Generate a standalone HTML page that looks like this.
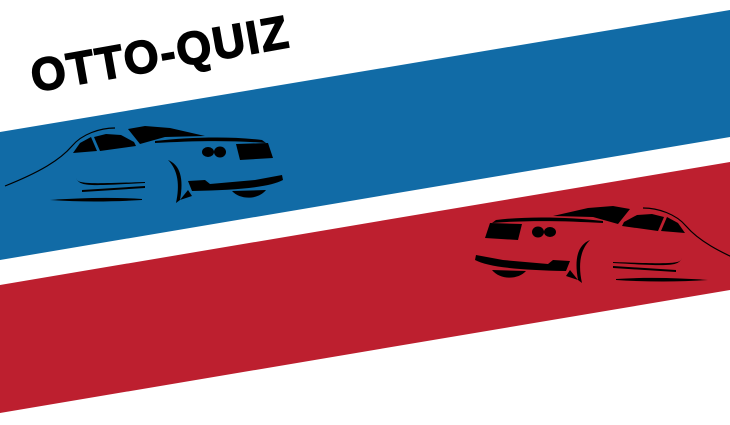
<!DOCTYPE html>
<html><head><meta charset="utf-8"><style>
html,body{margin:0;padding:0;background:#fff;width:730px;height:425px;overflow:hidden}
svg{display:block}
</style></head><body>
<svg width="730" height="425" viewBox="0 0 730 425" xmlns="http://www.w3.org/2000/svg">
<rect width="730" height="425" fill="#fff"/>
<polygon points="0,132 730,10 730,137 0,260" fill="#116ba6"/>
<polygon points="0,285 730,162 730,290 0,413" fill="#bd1f2f"/>
<text x="0" y="0" transform="translate(34,92) rotate(-10)" font-family="Liberation Sans, sans-serif" font-weight="bold" font-size="46" fill="#000" stroke="#000" stroke-width="1.6" letter-spacing="2" textLength="262" lengthAdjust="spacingAndGlyphs">OTTO-QUIZ</text>
<g id="car" fill="#000">
 <path d="M5,186 C40,172 60,160 72,146 C82,134 100,128 115,128" fill="none" stroke="#000" stroke-width="1.2"/>
 <path d="M73,153 L80,143 L91,137 L97,151 Z"/>
 <path d="M100,151 L94,137 L106,134 L121,135 L134,142 L136,146 Z"/>
 <path d="M128,129 L145,126 L170,128 L205,136 L165,137 L140,144 Z"/>
 <path d="M155,141 C190,137 230,136 262,140 L266,143 C230,140 190,141 155,143 Z"/>
 <ellipse cx="208" cy="152" rx="6" ry="5"/>
 <ellipse cx="220" cy="152" rx="6" ry="5.5"/>
 <path d="M236,144 L268,143 L273,158 L240,160 Z"/>
 <path d="M188,181 L205,180 L210,184 L255,180 L282,175 L283,180 C270,187 240,190 192,191 Z"/>
 <path d="M168,160 C180,165 184,178 180,200 L176,203 C180,185 178,170 168,160 Z"/>
 <path d="M180,200 L192,196 L188,190 Z"/>
 <path d="M232,191 C240,200 258,200 266,190 Z"/>
 <path d="M76,178 C78,184 85,184 145,182 L145,183 C90,186 80,187 76,178 Z"/>
 <path d="M82,190 L145,186 L145,188 L82,192 Z"/>
 <path d="M50,200 C80,198 110,197 142,199 L142,200 C110,202 80,202 50,200 Z"/>
</g>
<use href="#car" transform="translate(758,80) scale(-1,1)"/>
</svg>
</body></html>
